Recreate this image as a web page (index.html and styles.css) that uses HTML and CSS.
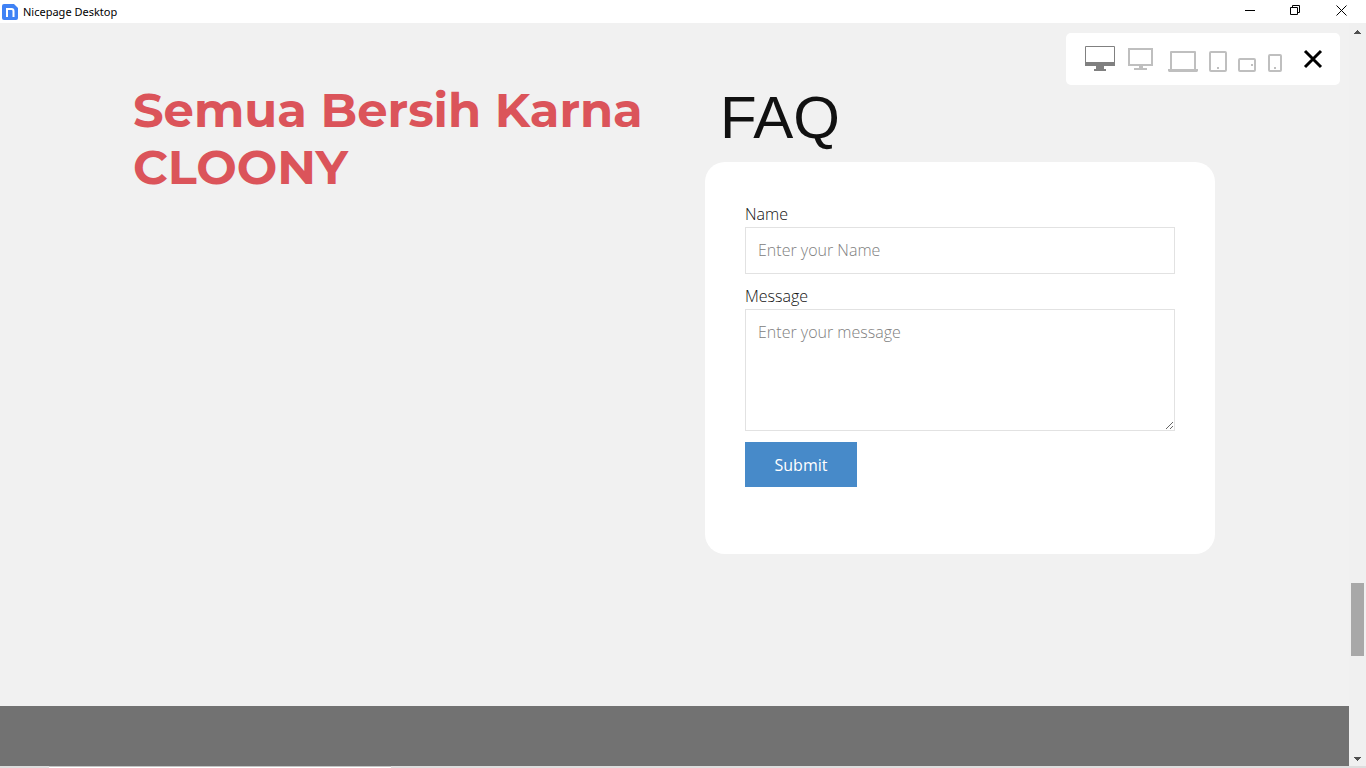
FILE: index.html
```html
<!DOCTYPE html>
<html lang="id">
<head>
<meta charset="utf-8">
<title>Nicepage Desktop</title>
<link rel="stylesheet" href="styles.css">
</head>
<body>
<header class="titlebar">
  <svg class="app-logo" width="16" height="16" viewBox="0 0 16 16" aria-hidden="true">
    <path d="M2 0h10l4 4v10a2 2 0 0 1-2 2H2a2 2 0 0 1-2-2V2a2 2 0 0 1 2-2z" fill="#3f82f5"/>
    <path d="M5 13V4M5 5h4.500q2 0 2 2v6" fill="none" stroke="#fff" stroke-width="2"/>
  </svg>
  <span class="app-name">Nicepage Desktop</span>
  <div class="window-controls">
    <button type="button" class="window-button" aria-label="Minimize"><svg width="11" height="11" viewBox="0 0 11 11"><path d="M1 5.500h10" stroke="#000"/></svg></button>
    <button type="button" class="window-button" aria-label="Restore"><svg width="11" height="11" viewBox="0 0 11 11" fill="none" stroke="#000"><path d="M.5 2.500h7v7h-7zM2.500 2.500v-2h7v7h-2"/></svg></button>
    <button type="button" class="window-button" aria-label="Close window"><svg width="11" height="11" viewBox="0 0 11 11"><path d="M.5.5l10 10M10.500.5l-10 10" stroke="#000"/></svg></button>
  </div>
</header>

<div class="viewport">
  <main class="page">
    <section class="contact">
      <div class="contact-inner">
        <h1 class="headline">Semua Bersih Karna CLOONY</h1>
        <div class="faq">
          <h2 class="faq-title">FAQ</h2>
          <form class="card">
            <label class="label" for="name">Name</label>
            <input class="field" id="name" type="text" placeholder="Enter your Name">
            <label class="label" for="message">Message</label>
            <textarea class="field message" id="message" placeholder="Enter your message"></textarea>
            <button class="submit" type="submit">Submit</button>
          </form>
        </div>
      </div>
    </section>
    <footer class="footer"></footer>
  </main>

  <div class="scrollbar" aria-hidden="true">
    <svg width="7" height="4" viewBox="0 0 7 4" shape-rendering="crispEdges"><path d="M3 0h1v1h1v1h1v1h1v1H0V3h1V2h1V1h1z" fill="#505050"/></svg>
    <div class="track"><div class="thumb"></div></div>
    <svg width="7" height="4" viewBox="0 0 7 4" shape-rendering="crispEdges"><path d="M0 0h7v1H6v1H5v1H4v1H3V3H2V2H1V1H0z" fill="#505050"/></svg>
  </div>

  <div class="devices" role="toolbar" aria-label="Preview size">
    <button type="button" class="device active" aria-label="Large desktop"><svg width="31" height="26" viewBox="0 0 31 26"><path d="M.5.500h29v18H.5z" fill="none" stroke="currentColor"/><path d="M0 16h30v4H0zM11 20h8v3h2v2H9v-2h2z" fill="currentColor"/></svg></button>
    <button type="button" class="device" aria-label="Desktop"><svg width="28" height="26" viewBox="0 0 28 26"><path d="M2 3h23v16H2z" fill="none" stroke="currentColor" stroke-width="2"/><path d="M12 20h4v2h4v2H7v-2h5z" fill="currentColor"/></svg></button>
    <button type="button" class="device" aria-label="Laptop"><svg width="32" height="26" viewBox="0 0 32 26"><path d="M5 23V6h24v17" fill="none" stroke="currentColor" stroke-width="2" stroke-linejoin="round"/><path d="M2 23h30v2l-1 1H3l-1-1z" fill="currentColor"/></svg></button>
    <button type="button" class="device" aria-label="Tablet"><svg width="18" height="26" viewBox="0 0 18 26"><rect x="1" y="6" width="16" height="19" rx="1" fill="none" stroke="currentColor" stroke-width="2"/><path d="M8 21h2v2H8z" fill="currentColor"/></svg></button>
    <button type="button" class="device" aria-label="Phone landscape"><svg width="19" height="26" viewBox="0 0 19 26"><rect x="1" y="13" width="16" height="12" rx="1" fill="none" stroke="currentColor" stroke-width="2"/><path d="M13 18h2v2h-2z" fill="currentColor"/></svg></button>
    <button type="button" class="device" aria-label="Phone portrait"><svg width="14" height="26" viewBox="0 0 14 26"><rect x="1" y="9" width="12" height="16" rx="1" fill="none" stroke="currentColor" stroke-width="2"/><path d="M6 21h2v2H6z" fill="currentColor"/></svg></button>
    <button type="button" class="device close" aria-label="Close preview"><svg width="40" height="26" viewBox="0 0 40 26"><path d="M12 5l16 16M28 5L12 21" stroke="#000" stroke-width="3"/></svg></button>
  </div>
</div>
<div class="taskbar-edge"><div class="taskbar-search"></div></div>
</body>
</html>
```
FILE: styles.css
```css
* {
  box-sizing: border-box;
}

body {
  margin: 0;
  min-height: 100vh;
  display: flex;
  flex-direction: column;
  background: #f1f1f1;
  color: #111;
  font-family: "Open Sans", sans-serif;
  font-size: 16px;
}

button {
  border: 0;
  padding: 0;
  background: none;
  font: inherit;
}

svg {
  display: block;
}

.titlebar {
  display: flex;
  align-items: center;
  height: 23px;
  padding-left: 2px;
  background: #fff;
}

.app-name {
  margin-left: 5px;
  color: #000;
  font-family: "Noto Sans", sans-serif;
  font-size: 11px;
}

.window-controls {
  display: flex;
  height: 100%;
  margin-left: auto;
  padding-right: 2px;
}

.window-button {
  display: grid;
  place-items: center;
  width: 46px;
  padding-bottom: 2px;
}

.viewport {
  position: relative;
  flex: 1;
  display: flex;
}

.page {
  flex: 1;
  display: flex;
  flex-direction: column;
}

.contact {
  flex: 1;
  padding: 59px 134px 40px 133px;
}

.contact-inner {
  display: grid;
  grid-template-columns: 1fr 510px;
  gap: 40px;
}

.headline {
  margin: 0;
  color: #db545a;
  font-family: Montserrat, Inter, sans-serif;
  font-size: 48px;
  font-weight: 700;
  line-height: 57px;
}

.faq-title {
  margin: 0 0 8px;
  padding-left: 15px;
  font-family: "Liberation Sans", Arial, sans-serif;
  font-size: 60px;
  font-weight: 400;
  line-height: 72px;
}

.card {
  display: flex;
  flex-direction: column;
  min-height: 392px;
  padding: 40px;
  border-radius: 20px;
  background: #fff;
}

.label {
  font-weight: 300;
  line-height: 25px;
}

.field {
  width: 100%;
  height: 47px;
  margin: 0 0 10px;
  padding: 9px 12px 11px;
  border: 1px solid #e2e2e2;
  border-radius: 0;
  background: #fff;
  color: #111;
  font: 300 16px/25px "Open Sans", sans-serif;
}

.field::placeholder {
  color: #808080;
}

.message {
  height: 122px;
  margin-bottom: 11px;
  padding-top: 10px;
  resize: vertical;
}

.submit {
  align-self: flex-start;
  width: 112px;
  height: 45px;
  background: #478ac9;
  color: #fff;
}

.footer {
  height: 60px;
  background: #727272;
}

.scrollbar {
  display: flex;
  flex-direction: column;
  align-items: center;
  width: 17px;
  padding: 7px 0 5px;
  background: #f0f0f0;
}

.track {
  flex: 1;
  display: flex;
  flex-direction: column;
  justify-content: flex-end;
  padding-bottom: 101px;
}

.thumb {
  width: 13px;
  height: 73px;
  background: #a8a8a8;
}

.devices {
  position: absolute;
  top: 10px;
  right: 26px;
  display: flex;
  gap: 11px;
  padding: 13px 7px 13px 19px;
  border-radius: 5px;
  background: #fff;
}

.device {
  color: #bfbfbf;
}

.device.active {
  color: #808080;
}

.taskbar-edge {
  height: 2px;
  padding-left: 49px;
  background: #dedede;
}

.taskbar-search {
  width: 342px;
  height: 2px;
  border-top: 1px solid #c4c4c4;
  background: #fff;
}
```
